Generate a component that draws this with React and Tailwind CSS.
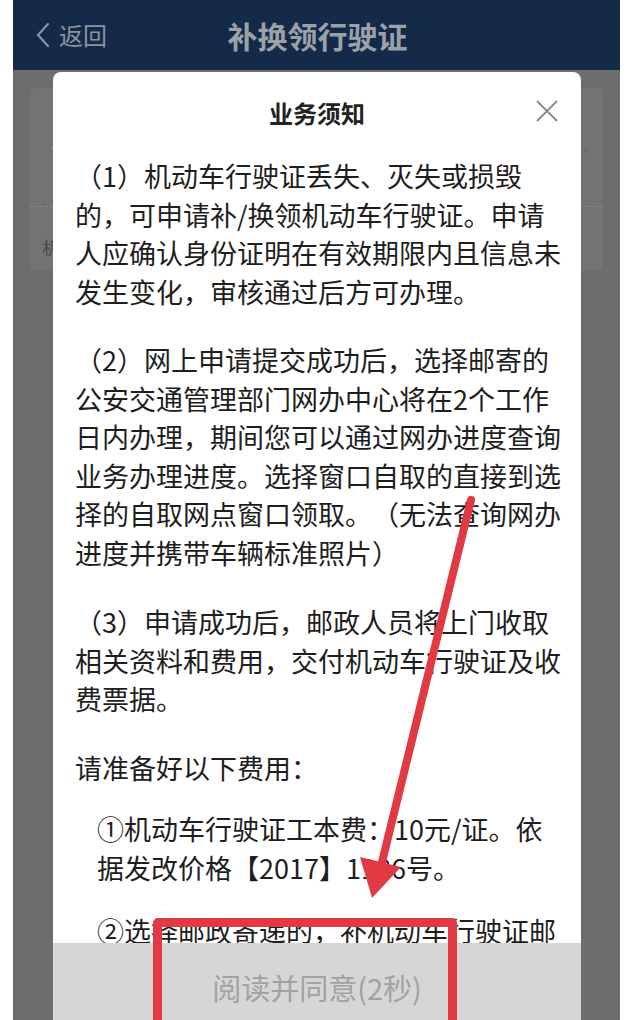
import React from "react";

const cjk = { fontFamily: '"Noto Sans CJK SC", "Noto Sans", sans-serif' };

const paragraphs = [
  { text: "（1）机动车行驶证丢失、灭失或损毁的，可申请补/换领机动车行驶证。申请人应确认身份证明在有效期限内且信息未发生变化，审核通过后方可办理。", cls: "mb-[30px]" },
  { text: "（2）网上申请提交成功后，选择邮寄的公安交通管理部门网办中心将在2个工作日内办理，期间您可以通过网办进度查询业务办理进度。选择窗口自取的直接到选择的自取网点窗口领取。（无法查询网办进度并携带车辆标准照片）", cls: "mb-[31px]" },
  { text: "（3）申请成功后，邮政人员将上门收取相关资料和费用，交付机动车行驶证及收费票据。", cls: "mb-[30px]" },
  { text: "请准备好以下费用：", cls: "mb-[23px]" },
  { text: "①机动车行驶证工本费：10元/证。依据发改价格【2017】1186号。", cls: "mb-[25px] pl-[22px]" },
  { text: "②选择邮政寄递的，补机动车行驶证邮寄费用由申请人承担。", cls: "pl-[22px]" },
];

const Header = () => (
  <div className="h-[70px] bg-[#132a49] flex items-center relative">
    <div className="flex items-center pl-[22px] text-[#8c939c]">
      <svg width="16" height="26" viewBox="0 0 16 26" fill="none">
        <path d="M13 2L3 13l10 11" stroke="currentColor" strokeWidth="2.2" strokeLinecap="round" />
      </svg>
      <span className="ml-[8px] text-[24px] leading-none">返回</span>
    </div>
    <div className="flex-1 text-center pr-[92px] text-[30px] font-bold text-[#9ca1a8] leading-none">
      补换领行驶证
    </div>
  </div>
);

const Behind = () => (
  <div className="flex-1 bg-[#6d6d6d] pt-[18px] px-[17px]">
    <div className="h-[182px] bg-[#737373] rounded-[4px] relative">
      <div className="absolute left-[21px] top-[58px] w-[3px] h-[3px] rounded-full bg-[#888]" />
      <div className="absolute right-[16px] top-[52px] text-[12px] text-[#555]">›</div>
      <div className="absolute left-0 right-0 top-[118px] border-t border-dashed border-[#888]" />
      <div className="absolute left-[12px] top-[146px] text-[18px] text-[#4a4a4a]">机</div>
    </div>
  </div>
);

const Modal = () => (
  <div className="absolute left-[40px] top-[2px] w-[528px] h-[961px] bg-white rounded-t-[8px] flex flex-col overflow-hidden">
    <div className="relative flex-1 overflow-hidden">
      <div className="pt-[24px] text-center text-[24px] leading-[34px] font-bold text-[#222]">业务须知</div>
      <svg className="absolute right-[22px] top-[27px]" width="24" height="24" viewBox="0 0 24 24" fill="none">
        <path d="M2 2l20 20M22 2L2 22" stroke="#8a8a8a" strokeWidth="1.8" />
      </svg>
      <div className="mt-[27px] pl-[22px] w-[512px] text-[27px] leading-[38.5px] text-[#1e1e1e] [text-spacing-trim:space-all]">
        {paragraphs.map((p, i) => (
          <p key={i} className={p.cls}>{p.text}</p>
        ))}
      </div>
    </div>
    <div className="h-[90px] shrink-0 bg-[#d6d6d6] flex items-center justify-center text-[29px] text-[#a2a2a2]">
      阅读并同意(2秒)
    </div>
  </div>
);

const Annotation = () => (
  <>
    <svg className="absolute left-0 top-0" width="627" height="1020" viewBox="0 0 627 1020">
      <line x1="471" y1="500" x2="382" y2="862" stroke="#e23a45" strokeWidth="8" strokeLinecap="round" />
      <polygon points="372,898 401,867 360,857" fill="#e23a45" />
    </svg>
    <div className="absolute left-[153px] top-[918px] w-[304px] h-[130px] border-[9px] border-[#e23a45] rounded-[5px]" />
  </>
);

export default function App() {
  return (
    <div className="w-[627px] h-[1020px] bg-white relative overflow-hidden" style={cjk}>
      <div className="ml-[13px] w-[607px] h-full flex flex-col">
        <Header />
        <div className="relative flex-1 flex flex-col">
          <Behind />
          <Modal />
        </div>
      </div>
      <Annotation />
    </div>
  );
}
